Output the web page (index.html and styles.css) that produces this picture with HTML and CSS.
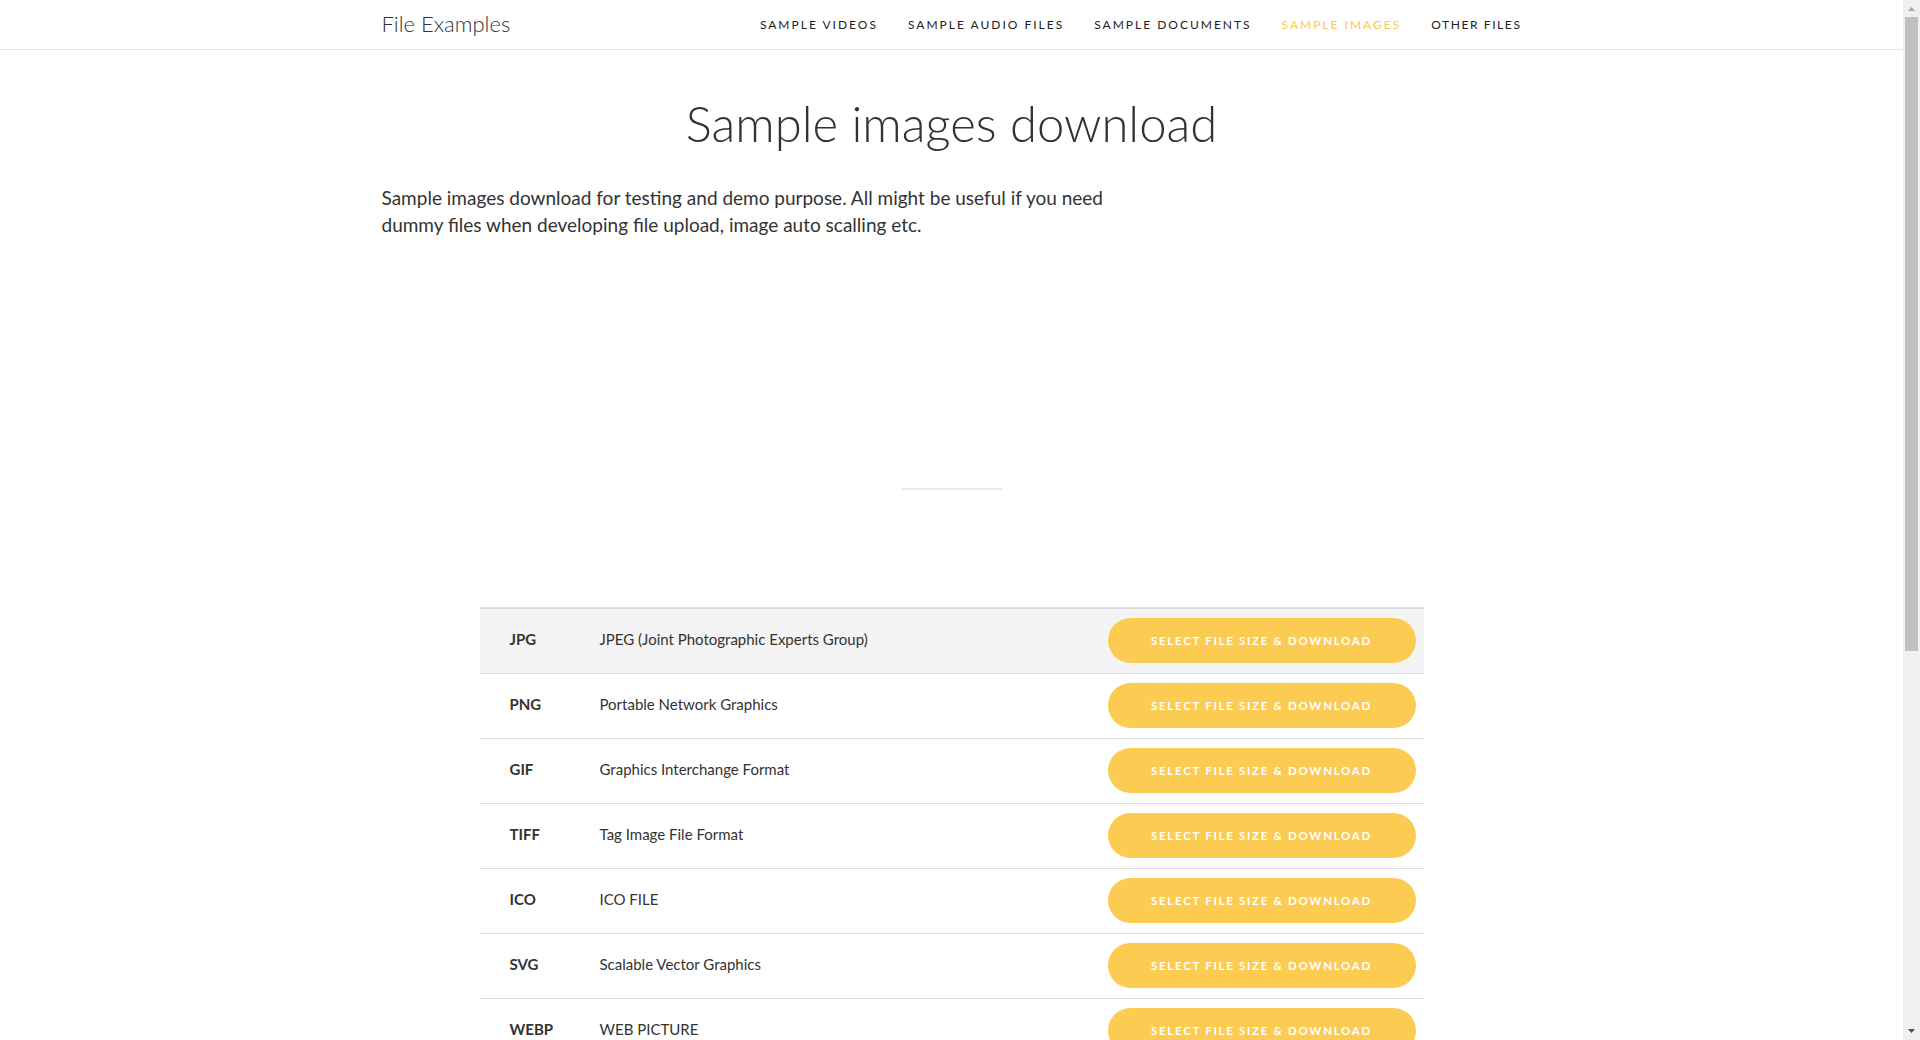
FILE: index.html
```html
<!DOCTYPE html>
<html lang="en">
<head>
<meta charset="utf-8">
<title>Sample images download</title>
<link rel="stylesheet" href="styles.css">
</head>
<body>
<div class="page">
<header class="topbar">
  <div class="container bar">
    <a class="brand" href="#">File Examples</a>
    <nav class="nav">
      <a href="#">Sample Videos</a>
      <a href="#">Sample Audio Files</a>
      <a href="#">Sample Documents</a>
      <a href="#" class="active">Sample Images</a>
      <a href="#">Other Files</a>
    </nav>
  </div>
</header>
<main class="container">
  <h1 class="title">Sample images download</h1>
  <p class="lead">Sample images download for testing and demo purpose. All might be useful if you need dummy files when developing file upload, image auto scalling etc.</p>
  <div class="ad-space"></div>
  <hr class="divider">
  <table class="files">
    <tbody>
      <tr class="hl"><td class="ext">JPG</td><td class="desc">JPEG (Joint Photographic Experts Group)</td><td class="act"><a class="btn" href="#">Select file size &amp; download</a></td></tr>
      <tr><td class="ext">PNG</td><td class="desc">Portable Network Graphics</td><td class="act"><a class="btn" href="#">Select file size &amp; download</a></td></tr>
      <tr><td class="ext">GIF</td><td class="desc">Graphics Interchange Format</td><td class="act"><a class="btn" href="#">Select file size &amp; download</a></td></tr>
      <tr><td class="ext">TIFF</td><td class="desc">Tag Image File Format</td><td class="act"><a class="btn" href="#">Select file size &amp; download</a></td></tr>
      <tr><td class="ext">ICO</td><td class="desc">ICO FILE</td><td class="act"><a class="btn" href="#">Select file size &amp; download</a></td></tr>
      <tr><td class="ext">SVG</td><td class="desc">Scalable Vector Graphics</td><td class="act"><a class="btn" href="#">Select file size &amp; download</a></td></tr>
      <tr><td class="ext">WEBP</td><td class="desc">WEB PICTURE</td><td class="act"><a class="btn" href="#">Select file size &amp; download</a></td></tr>
    </tbody>
  </table>
  <div class="after"></div>
</main>
<footer class="foot">
  <div class="container">© File Examples</div>
</footer>
</div>
<div class="scrollbar" aria-hidden="true">
  <div class="sb-btn"><svg width="17" height="17" viewBox="0 0 17 17"><path d="M5 11 L8.5 7 L12 11 Z" fill="#a3a3a3"/></svg></div>
  <div class="sb-track"><div class="sb-thumb"></div></div>
  <div class="sb-btn"><svg width="17" height="17" viewBox="0 0 17 17"><path d="M5 6 L12 6 L8.5 10 Z" fill="#505050"/></svg></div>
</div>
</body>
</html>
```

FILE: styles.css
```css
html, body {
  margin: 0;
  padding: 0;
}
html {
  overflow-x: hidden;
}
body {
  font-family: "Lato", "Open Sans", sans-serif;
  color: #333;
  background: #fff;
}
.page {
  width: 1903px;
}
a {
  text-decoration: none;
  color: inherit;
}
.container {
  width: 1140px;
  margin: 0 auto;
}
.topbar {
  height: 50px;
  border-bottom: 1px solid #e7e7e7;
  box-sizing: border-box;
}
.bar {
  height: 49px;
  display: flex;
  align-items: center;
  justify-content: space-between;
}
.brand {
  font-size: 22px;
  font-weight: 300;
  color: #333;
  margin-top: -2px;
}
.nav {
  display: flex;
  gap: 30px;
  margin-top: -1px;
}
.nav a {
  font-size: 12px;
  letter-spacing: 2px;
  text-transform: uppercase;
  color: #222;
}
.nav a:last-child {
  letter-spacing: 1.6px;
  margin-right: 0;
}
.nav a.active {
  color: #fcc94f;
}
.title {
  margin: 45px 0 0;
  text-align: center;
  font-size: 49px;
  line-height: 56px;
  font-weight: 300;
  color: #333;
}
.lead {
  margin: 33px 0 0;
  width: 760px;
  font-size: 19px;
  line-height: 27px;
  color: #333;
}
.ad-space {
  height: 250px;
}
.divider {
  width: 100px;
  margin: 0 auto;
  border: 0;
  border-top: 2px solid #eaeaea;
}
.files {
  width: 944px;
  margin: 117px auto 0;
  border-collapse: collapse;
  border-top: 2px solid #ddd;
  table-layout: fixed;
}
.files td {
  border-bottom: 1px solid #ddd;
  height: 65px;
  box-sizing: border-box;
  padding: 0 8px;
  font-size: 15px;
  color: #333;
}
.files tr.hl td {
  background: #f4f4f4;
}
.files td.ext {
  width: 120px;
  padding-left: 30px;
  padding-bottom: 3px;
  font-weight: 700;
}
.files td.desc {
  padding-left: 0;
  padding-bottom: 3px;
}
.files td.act {
  width: 324px;
  text-align: right;
}
.btn {
  display: inline-flex;
  align-items: center;
  justify-content: center;
  width: 308px;
  height: 45px;
  border-radius: 23px;
  background: #fccb52;
  color: #fff;
  font-size: 11.5px;
  font-weight: 700;
  letter-spacing: 1.7px;
  text-transform: uppercase;
  vertical-align: middle;
}
.after {
  height: 400px;
}
.foot {
  border-top: 1px solid #e7e7e7;
  padding: 30px 0;
  font-size: 14px;
  color: #777;
}
.scrollbar {
  position: fixed;
  top: 0;
  right: 0;
  bottom: 0;
  width: 17px;
  background: #f0f0f0;
  display: flex;
  flex-direction: column;
}
.sb-btn {
  height: 17px;
  flex: none;
}
.sb-btn svg {
  display: block;
}
.sb-track {
  flex: 1;
  padding: 0 2px;
}
.sb-thumb {
  height: 634px;
  background: #c1c1c1;
}
```
